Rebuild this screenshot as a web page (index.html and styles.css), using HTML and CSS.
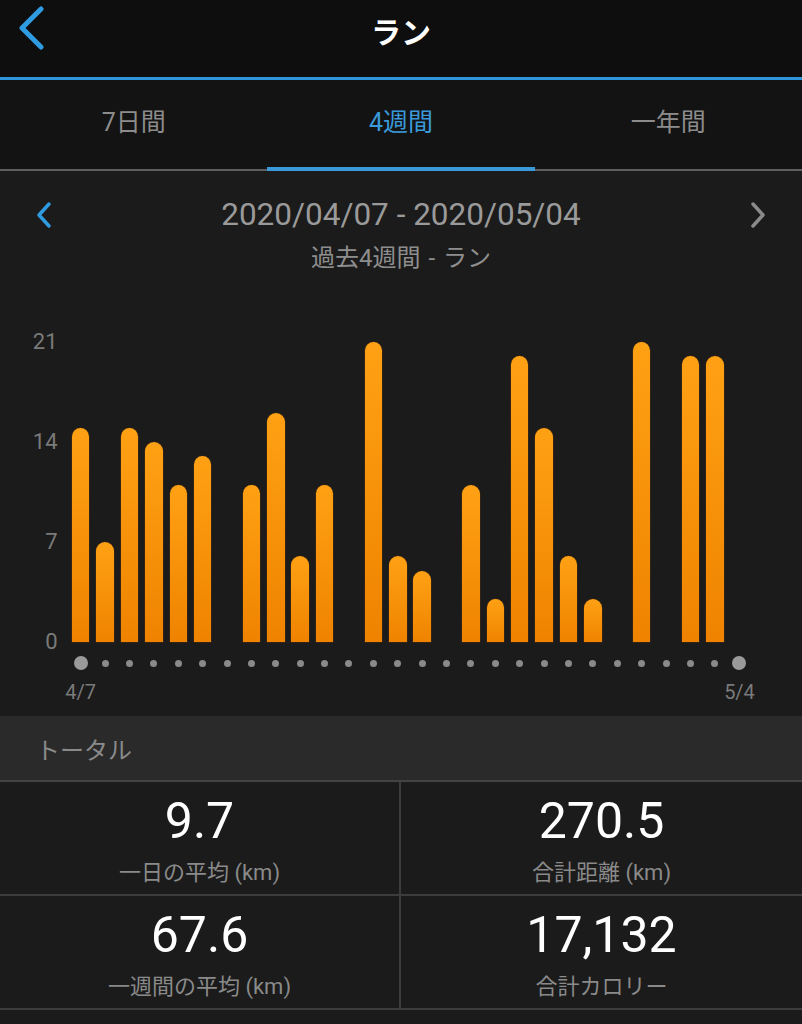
FILE: index.html
```html
<!DOCTYPE html>
<html lang="ja">
<head>
<meta charset="utf-8">
<title>ラン</title>
<link rel="stylesheet" href="styles.css">
</head>
<body>
<div class="app">
  <header class="topbar">
    <svg class="back" width="30" height="50" viewBox="0 0 30 50"><polyline points="22,4 3,23 22,42" fill="none" stroke="#2f9be0" stroke-width="5" stroke-linecap="round" stroke-linejoin="round"/></svg>
    <h1 class="title">ラン</h1>
    <span></span>
  </header>
  <nav class="tabs">
    <div class="tab">7日間</div>
    <div class="tab active">4週間</div>
    <div class="tab">一年間</div>
  </nav>
  <section class="range">
    <div class="range-row">
      <svg class="chev" width="18" height="28" viewBox="0 0 18 28"><polyline points="14,3 4,14 14,25" fill="none" stroke="#2f9be0" stroke-width="3.5" stroke-linecap="round" stroke-linejoin="round"/></svg>
      <div class="range-date">2020/04/07 - 2020/05/04</div>
      <svg class="chev right" width="18" height="28" viewBox="0 0 18 28"><polyline points="4,3 14,14 4,25" fill="none" stroke="#8a8a8a" stroke-width="3.5" stroke-linecap="round" stroke-linejoin="round"/></svg>
    </div>
    <div class="range-sub">過去4週間 - ラン</div>
  </section>
  <section class="chart">
    <div class="axis">
      <span>21</span><span>14</span><span>7</span><span>0</span>
    </div>
    <div class="bars" id="bars"></div>
    <div class="dots" id="dots"></div>
    <div class="xlabels">
      <div class="xl"><span>4/7</span></div>
      <div class="xl"><span>5/4</span></div>
    </div>
  </section>
  <div class="total-head">トータル</div>
  <section class="stats">
    <div class="cell">
      <div class="val">9.7</div>
      <div class="lbl">一日の平均 (km)</div>
    </div>
    <div class="cell">
      <div class="val">270.5</div>
      <div class="lbl">合計距離 (km)</div>
    </div>
    <div class="cell">
      <div class="val">67.6</div>
      <div class="lbl">一週間の平均 (km)</div>
    </div>
    <div class="cell">
      <div class="val">17,132</div>
      <div class="lbl">合計カロリー</div>
    </div>
  </section>
</div>
<script src="script.js"></script>
</body>
</html>
```
FILE: styles.css
```css
* { box-sizing: border-box; }
html, body { margin: 0; padding: 0; }
body {
  background: #1b1b1b;
  font-family: Roboto, "Noto Sans CJK JP", sans-serif;
  width: 802px;
  height: 1024px;
  overflow: hidden;
}
.app { width: 802px; }

.topbar {
  display: grid;
  grid-template-columns: 1fr auto 1fr;
  align-items: center;
  height: 80px;
  padding: 0 0 17px 0;
  background: #0e0e0e;
  border-bottom: 3px solid #2f95db;
}
.back { margin-left: 19px; display: block; }
.title {
  margin: 0;
  color: #fff;
  font-family: "Noto Sans CJK JP", sans-serif;
  font-weight: 700;
  font-size: 30px;
  line-height: 36px;
}

.tabs {
  display: grid;
  grid-template-columns: repeat(3, 1fr);
  height: 91px;
  background: #131313;
  border-bottom: 2px solid #5e5e5e;
}
.tab {
  position: relative;
  display: flex;
  align-items: center;
  justify-content: center;
  padding-bottom: 9px;
  font-size: 25px;
  color: #8c8c8c;
}
.tab.active { color: #3a9ad9; }
.tab.active::after {
  content: "";
  position: absolute;
  left: 0; right: 0; bottom: -2px;
  height: 4px;
  background: #3a9ad9;
}

.range { padding-top: 25px; }
.range-row {
  display: grid;
  grid-template-columns: 1fr auto 1fr;
  align-items: center;
  padding: 0 35px;
}
.chev { display: block; }
.chev.right { justify-self: end; }
.range-date {
  font-size: 31.5px;
  line-height: 38px;
  color: #9a9a9a;
}
.range-sub {
  margin-top: 9px;
  text-align: center;
  font-size: 24px;
  line-height: 30px;
  word-spacing: 2px;
  color: #8e8e8e;
}

.chart {
  display: grid;
  grid-template-columns: 68.5px 683.2px;
  margin-top: 56px;
  padding-bottom: 12px;
}
.axis {
  grid-row: 1;
  grid-column: 1;
  height: 326px;
  display: flex;
  flex-direction: column;
  justify-content: space-between;
  align-items: flex-end;
  padding-right: 11px;
}
.axis span {
  height: 26px;
  line-height: 26px;
  font-size: 22px;
  color: #7a7a7a;
}
.bars {
  grid-row: 1;
  grid-column: 2;
  align-self: start;
  display: flex;
  align-items: flex-end;
  height: 313px;
  padding-top: 13px;
}
.col {
  width: 24.4px;
  flex: none;
  display: flex;
  justify-content: center;
  align-items: flex-end;
  height: 100%;
}
.bar {
  width: 17.5px;
  border-radius: 9px 9px 0 0;
  background: linear-gradient(#ffa114, #ef8300);
  box-shadow: 0 0 0 0.5px rgba(120, 60, 0, 0.5);
}
.dots {
  grid-row: 2;
  grid-column: 2;
  display: flex;
  height: 16px;
  align-items: center;
}
.dot-cell {
  width: 24.4px;
  flex: none;
  display: flex;
  justify-content: center;
}
.dot {
  width: 7px;
  height: 7px;
  border-radius: 50%;
  background: #8a8a8a;
}
.dot.big {
  width: 14px;
  height: 14px;
  background: #9a9a9a;
}
.xlabels {
  grid-row: 3;
  grid-column: 2;
  display: flex;
  justify-content: space-between;
  margin-top: 9px;
}
.xl {
  width: 24.4px;
  display: flex;
  justify-content: center;
  font-size: 20px;
  line-height: 24px;
  color: #7a7a7a;
  white-space: nowrap;
}

.total-head {
  height: 66px;
  display: flex;
  align-items: center;
  padding-left: 36px;
  background: #2a2a2a;
  border-bottom: 2px solid #434343;
  font-size: 24px;
  color: #8a8a8a;
}

.stats {
  display: grid;
  grid-template-columns: 401px 401px;
}
.cell {
  height: 114px;
  border-bottom: 2px solid #3c3c3c;
  text-align: center;
  padding-top: 11px;
}
.cell:nth-child(odd) { border-right: 2px solid #3c3c3c; }
.val {
  font-size: 50px;
  line-height: 56px;
  color: #fff;
}
.lbl {
  margin-top: 10px;
  font-size: 22px;
  line-height: 28px;
  color: #8a8a8a;
}
```
FILE: script.js
```js
(function () {
  var values = [15,7,15,14,11,13,0,11,16,6,11,0,21,6,5,0,11,3,20,15,6,3,0,21,0,20,20,0];
  var unit = 300 / 21;
  var bars = document.getElementById('bars');
  var dots = document.getElementById('dots');
  values.forEach(function (v, i) {
    var col = document.createElement('div');
    col.className = 'col';
    if (v > 0) {
      var b = document.createElement('div');
      b.className = 'bar';
      b.style.height = (v * unit).toFixed(1) + 'px';
      col.appendChild(b);
    }
    bars.appendChild(col);
    var dc = document.createElement('div');
    dc.className = 'dot-cell';
    var d = document.createElement('div');
    d.className = 'dot' + (i === 0 || i === values.length - 1 ? ' big' : '');
    dc.appendChild(d);
    dots.appendChild(dc);
  });
})();
```
